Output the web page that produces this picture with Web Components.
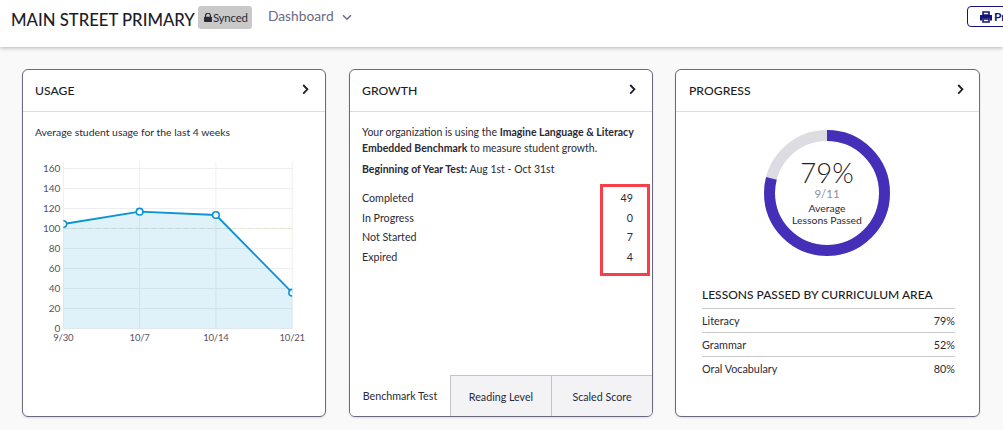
<!DOCTYPE html>
<html lang="en">
<head>
<meta charset="utf-8">
<title>Main Street Primary</title>
<style>
  html, body { margin: 0; height: 100%; overflow: hidden; background: #f9f9f9; }
  body { font-family: Lato, "Open Sans", sans-serif; color: #2b2a35; }
</style>
</head>
<body>
<app-header></app-header>
<dash-grid>
  <dash-card heading="USAGE"><usage-panel></usage-panel></dash-card>
  <dash-card heading="GROWTH"><growth-panel></growth-panel></dash-card>
  <dash-card heading="PROGRESS"><progress-panel></progress-panel></dash-card>
</dash-grid>

<script>
class AppHeader extends HTMLElement {
  connectedCallback() {
    this.attachShadow({ mode: 'open' });
    this.shadowRoot.innerHTML = `
      <style>
        :host { display: flex; height: 47px; background: #fff; box-shadow: 0 1px 4px rgba(0,0,0,.28); position: relative; align-items: flex-start; padding-left: 11px; box-sizing: border-box; }
        h1 { margin: 10px 0 0; font-size: 16.7px; line-height: 21px; font-weight: 500; color: #1d1c27; white-space: nowrap; }
        .badge { display: flex; align-items: center; gap: 1px; margin: 6px 0 0 3px; height: 23px; width: 54px; box-sizing: border-box; padding-left: 6px; border-radius: 3px; background: #c9c9c9; font-size: 11.5px; color: #2b2a35; letter-spacing: -.2px; }
        .nav { display: flex; align-items: center; margin: 6px 0 0 16px; height: 19px; font-size: 13.8px; color: #6c6a80; }
        .nav svg { margin-left: 8px; margin-top: 4px; }
        .print { display: flex; align-items: center; gap: 2px; position: absolute; left: 967px; top: 6px; width: 60px; height: 21px; box-sizing: border-box; padding-left: 12px; border: 1.5px solid #14127a; border-radius: 4px; background: #fff; color: #14127a; font: 700 12px Lato, sans-serif; }
      </style>
      <h1>MAIN STREET PRIMARY</h1>
      <span class="badge">
        <svg width="8" height="9" viewBox="0 0 8 9"><path d="M1.6 4V2.6a2.4 2.4 0 0 1 4.8 0V4" fill="none" stroke="#2b2a35" stroke-width="1.2"/><rect y="3.7" width="8" height="5.3" rx=".8" fill="#2b2a35"/></svg>
        Synced
      </span>
      <span class="nav">Dashboard
        <svg width="10" height="7" viewBox="0 0 10 7"><path d="M1 1.2 5 5.2 9 1.2" fill="none" stroke="#6c6a80" stroke-width="1.5"/></svg>
      </span>
      <span class="print">
        <svg width="12" height="12" viewBox="0 0 12 12"><path d="M3 1h6v3H3z" fill="none" stroke="#14127a" stroke-width="1.6"/><path d="M0 4h12v5.5H10V7.5H2v2H0z" fill="#14127a"/><path d="M3 8h6v3H3z" fill="none" stroke="#14127a" stroke-width="1.6"/></svg>
        Print
      </span>
    `;
  }
}

class DashGrid extends HTMLElement {
  connectedCallback() {
    this.attachShadow({ mode: 'open' });
    this.shadowRoot.innerHTML = `
      <style>
        :host { display: grid; grid-template-columns: 304px 304px 304px; gap: 23px; padding: 22px 0 0 22px; height: 348px; }
        ::slotted(dash-card:last-child) { margin-left: -1px; }
      </style>
      <slot></slot>
    `;
  }
}

class DashCard extends HTMLElement {
  connectedCallback() {
    this.attachShadow({ mode: 'open' });
    this.shadowRoot.innerHTML = `
      <style>
        :host { display: flex; flex-direction: column; height: 348px; box-sizing: border-box; background: #fff; border: 1px solid #6b6880; border-radius: 6px; box-shadow: 0 1px 2px rgba(0,0,0,.12); overflow: hidden; }
        header { display: flex; align-items: center; justify-content: space-between; flex: none; height: 42px; box-sizing: border-box; padding: 0 16px 0 12px; border-bottom: 1px solid #dcdcdc; font-size: 12.2px; font-weight: 500; color: #1d1c27; }
        :host(:last-child) header { padding: 0 15px 0 13px; }
        svg { margin-top: -3px; }
        .body { flex: 1; min-height: 0; display: flex; flex-direction: column; }
      </style>
      <header>
        <span>${this.getAttribute('heading')}</span>
        <svg width="7" height="11" viewBox="0 0 7 11"><path d="M1.2 1 5.4 5.3 1.2 9.6" fill="none" stroke="#1d1c27" stroke-width="1.8"/></svg>
      </header>
      <div class="body"><slot></slot></div>
    `;
  }
}

class UsagePanel extends HTMLElement {
  connectedCallback() {
    this.attachShadow({ mode: 'open' });
    // chart coordinates are relative to the svg, which starts at the card's inner edge
    const x0 = 63.3 - 23, dx = 76.3, yBase = 174.5;
    const xs = [0, 1, 2, 3].map(i => x0 + i * dx);
    const ys = [104.5, 116.8, 113.5, 35.8].map(v => yBase - v);
    let grid = '', labels = '';
    for (let v = 0; v <= 160; v += 20) {
      grid += `<line x1="${x0}" x2="${xs[3]}" y1="${yBase - v}" y2="${yBase - v}" stroke="#eeeef0"/>`;
      labels += `<text x="${x0 - 3}" y="${yBase - v + 3.5}" text-anchor="end">${v}</text>`;
    }
    ['9/30', '10/7', '10/14', '10/21'].forEach((d, i) => {
      grid += `<line x1="${xs[i]}" x2="${xs[i]}" y1="${yBase - 167}" y2="${yBase}" stroke="#eeeef0"/>`;
      labels += `<text class="day" x="${xs[i]}" y="${yBase + 12}" text-anchor="middle">${d}</text>`;
    });
    const line = xs.map((x, i) => `${x},${ys[i]}`).join(' ');
    const dots = xs.map((x, i) => `<circle cx="${x}" cy="${ys[i]}" r="3.3" fill="#fff" stroke="#0b93d3" stroke-width="1.6"/>`).join('');
    this.shadowRoot.innerHTML = `
      <style>
        :host { display: block; }
        p { margin: 14px 0 0 12px; font-size: 10.4px; line-height: 13px; color: #2b2a35; }
        svg { display: block; margin: 15px 0 0 0; }
        text { font: 10px Lato, sans-serif; fill: #55535f; }
        text.day { font-size: 9.5px; letter-spacing: -.2px; }
      </style>
      <p>Average student usage for the last 4 weeks</p>
      <svg width="302" height="200" viewBox="0 0 302 200">
        <defs><clipPath id="plot"><rect x="${x0}" y="0" width="${dx * 3}" height="200"/></clipPath></defs>
        ${grid}
        <line x1="${x0}" x2="${xs[3]}" y1="${yBase - 100}" y2="${yBase - 100}" stroke="#dfe7cf" stroke-dasharray="5 3"/>
        <polygon points="${x0},${yBase} ${line} ${xs[3]},${yBase}" fill="#0b93d3" fill-opacity=".13"/>
        <polyline points="${line}" fill="none" stroke="#0b93d3" stroke-width="1.8"/>
        <g clip-path="url(#plot)">${dots}</g>
        ${labels}
      </svg>
    `;
  }
}

class GrowthPanel extends HTMLElement {
  connectedCallback() {
    this.attachShadow({ mode: 'open' });
    this.shadowRoot.innerHTML = `
      <style>
        :host { display: flex; flex-direction: column; flex: 1; position: relative; font-size: 10.5px; color: #2b2a35; }
        .content { flex: 1; padding: 12px 19px 0 12px; }
        p { margin: 0 -6px 0 0; line-height: 16px; }
        b { font-weight: 700; }
        .test { margin-top: 5px; }
        dl { display: grid; grid-template-columns: 1fr auto; margin: 11px 0 0; row-gap: 0; line-height: 19.6px; font-size: 10.7px; }
        dd { margin: 0; text-align: right; }
        dt { margin: 0; }
        .mark { position: absolute; left: 250px; top: 72px; width: 50px; height: 92px; box-sizing: border-box; border: 3px solid #f5404a; }
        nav { display: grid; grid-template-columns: 100px 101px 1fr; height: 41px; flex: none; font-size: 10.7px; }
        nav span { display: flex; align-items: center; justify-content: center; background: #f3f3f6; border-top: 1px solid #c4c4c8; border-left: 1px solid #c4c4c8; }
        nav span.on { background: #fff; border: 0; }
      </style>
      <div class="content">
        <p>Your organization is using the <b>Imagine Language &amp; Literacy Embedded Benchmark</b> to measure student growth.</p>
        <p class="test"><b>Beginning of Year Test:</b> Aug 1st - Oct 31st</p>
        <dl>
          <dt>Completed</dt><dd>49</dd>
          <dt>In Progress</dt><dd>0</dd>
          <dt>Not Started</dt><dd>7</dd>
          <dt>Expired</dt><dd>4</dd>
        </dl>
      </div>
      <div class="mark"></div>
      <nav>
        <span class="on">Benchmark Test</span>
        <span>Reading Level</span>
        <span>Scaled Score</span>
      </nav>
    `;
  }
}

class ProgressPanel extends HTMLElement {
  connectedCallback() {
    this.attachShadow({ mode: 'open' });
    const r = 57.5, c = 2 * Math.PI * r;
    this.shadowRoot.innerHTML = `
      <style>
        :host { display: block; font-size: 10.8px; color: #2b2a35; }
        .ring { position: relative; width: 126px; height: 126px; margin: 18px 0 0 88px; }
        svg { display: block; }
        .label { position: absolute; inset: 0; display: flex; flex-direction: column; align-items: center; padding-top: 28px; box-sizing: border-box; text-align: center; line-height: 12px; font-size: 10.4px; }
        .pct { font-size: 27.5px; line-height: 30px; font-weight: 300; color: #1d1c27; }
        .frac { font-size: 11.5px; line-height: 11px; margin-bottom: 3px; color: #8f8d99; }
        h2 { margin: 32px 0 0 26px; font-size: 12px; line-height: 14px; font-weight: 500; color: #1d1c27; }
        ul { list-style: none; margin: 6px 24px 0 26px; padding: 0; }
        li { display: flex; justify-content: space-between; height: 24px; line-height: 24px; box-sizing: border-box; border-top: 1px solid #c9c9c9; }
      </style>
      <div class="ring">
        <svg width="126" height="126" viewBox="0 0 126 126">
          <circle cx="63" cy="63" r="${r}" fill="none" stroke="#dddce3" stroke-width="11"/>
          <circle cx="63" cy="63" r="${r}" fill="none" stroke="#452fb8" stroke-width="11" stroke-dasharray="${c * .79} ${c}" transform="rotate(-90 63 63)"/>
        </svg>
        <div class="label">
          <span class="pct">79%</span>
          <span class="frac">9/11</span>
          <span>Average</span>
          <span>Lessons Passed</span>
        </div>
      </div>
      <h2>LESSONS PASSED BY CURRICULUM AREA</h2>
      <ul>
        <li><span>Literacy</span><span>79%</span></li>
        <li><span>Grammar</span><span>52%</span></li>
        <li><span>Oral Vocabulary</span><span>80%</span></li>
      </ul>
    `;
  }
}

customElements.define('app-header', AppHeader);
customElements.define('dash-grid', DashGrid);
customElements.define('dash-card', DashCard);
customElements.define('usage-panel', UsagePanel);
customElements.define('growth-panel', GrowthPanel);
customElements.define('progress-panel', ProgressPanel);
</script>
</body>
</html>
